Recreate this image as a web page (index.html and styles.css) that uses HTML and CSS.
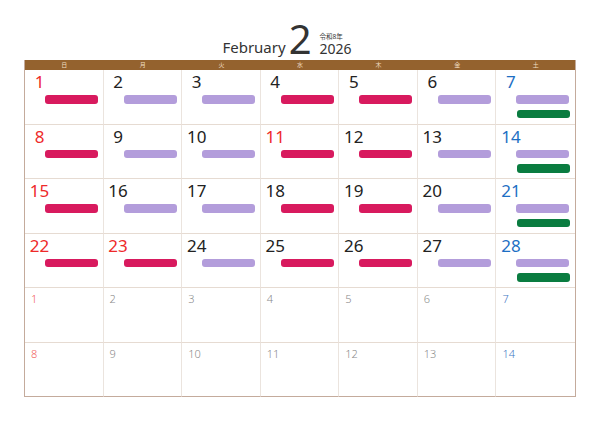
FILE: index.html
```html
<!DOCTYPE html>
<html lang="ja">
<head>
<meta charset="utf-8">
<link rel="stylesheet" href="styles.css">
</head>
<body>
<div class="page">
  <div class="title">
    <span class="month">February</span>
    <span class="big">2</span>
    <span class="yearbox"><span class="era">令和8年</span><span class="year">2026</span></span>
  </div>
  <div class="cal">
    <div class="hd">日</div><div class="hd">月</div><div class="hd">火</div><div class="hd">水</div><div class="hd">木</div><div class="hd">金</div><div class="hd">土</div>

    <div class="cell"><span class="num red">1</span><i class="bar r"></i></div>
    <div class="cell"><span class="num">2</span><i class="bar p"></i></div>
    <div class="cell"><span class="num">3</span><i class="bar p"></i></div>
    <div class="cell"><span class="num">4</span><i class="bar r"></i></div>
    <div class="cell"><span class="num">5</span><i class="bar r"></i></div>
    <div class="cell"><span class="num">6</span><i class="bar p"></i></div>
    <div class="cell last"><span class="num blue">7</span><i class="bar p"></i><i class="bar g"></i></div>

    <div class="cell"><span class="num red">8</span><i class="bar r"></i></div>
    <div class="cell"><span class="num">9</span><i class="bar p"></i></div>
    <div class="cell"><span class="num">10</span><i class="bar p"></i></div>
    <div class="cell"><span class="num red">11</span><i class="bar r"></i></div>
    <div class="cell"><span class="num">12</span><i class="bar r"></i></div>
    <div class="cell"><span class="num">13</span><i class="bar p"></i></div>
    <div class="cell last"><span class="num blue">14</span><i class="bar p"></i><i class="bar g"></i></div>

    <div class="cell"><span class="num red">15</span><i class="bar r"></i></div>
    <div class="cell"><span class="num">16</span><i class="bar p"></i></div>
    <div class="cell"><span class="num">17</span><i class="bar p"></i></div>
    <div class="cell"><span class="num">18</span><i class="bar r"></i></div>
    <div class="cell"><span class="num">19</span><i class="bar r"></i></div>
    <div class="cell"><span class="num">20</span><i class="bar p"></i></div>
    <div class="cell last"><span class="num blue">21</span><i class="bar p"></i><i class="bar g"></i></div>

    <div class="cell"><span class="num red">22</span><i class="bar r"></i></div>
    <div class="cell"><span class="num red">23</span><i class="bar r"></i></div>
    <div class="cell"><span class="num">24</span><i class="bar p"></i></div>
    <div class="cell"><span class="num">25</span><i class="bar r"></i></div>
    <div class="cell"><span class="num">26</span><i class="bar r"></i></div>
    <div class="cell"><span class="num">27</span><i class="bar p"></i></div>
    <div class="cell last"><span class="num blue">28</span><i class="bar p"></i><i class="bar g"></i></div>

    <div class="cell"><span class="sm red">1</span></div>
    <div class="cell"><span class="sm">2</span></div>
    <div class="cell"><span class="sm">3</span></div>
    <div class="cell"><span class="sm">4</span></div>
    <div class="cell"><span class="sm">5</span></div>
    <div class="cell"><span class="sm">6</span></div>
    <div class="cell last"><span class="sm blue">7</span></div>

    <div class="cell bottom"><span class="sm red">8</span></div>
    <div class="cell bottom"><span class="sm">9</span></div>
    <div class="cell bottom"><span class="sm">10</span></div>
    <div class="cell bottom"><span class="sm">11</span></div>
    <div class="cell bottom"><span class="sm">12</span></div>
    <div class="cell bottom"><span class="sm">13</span></div>
    <div class="cell bottom last"><span class="sm blue">14</span></div>
  </div>
</div>
</body>
</html>
```
FILE: styles.css
```css
* { box-sizing: border-box; }
html, body { margin: 0; padding: 0; background: #fff; }
body { font-family: "Noto Sans", "Noto Sans CJK JP", sans-serif; font-weight: 300; color: #222; }
.page { width: 600px; height: 424px; padding: 0 24px; }
.title {
  height: 60px;
  display: flex;
  justify-content: center;
  align-items: flex-end;
  padding-bottom: 3px;
  padding-right: 26px;
  color: #333;
}
.month { font-size: 15px; line-height: 20px; margin-right: 3px; font-weight: 400; }
.big { font-size: 40px; line-height: 30px; margin-bottom: 3px; margin-right: 8px; font-weight: 400; }
.yearbox { display: flex; flex-direction: column; line-height: 1; }
.era { font-size: 6.5px; margin-bottom: 1px; font-weight: 400; }
.year { font-size: 14px; line-height: 16px; font-weight: 400; }
.cal {
  display: grid;
  grid-template-columns: repeat(7, 1fr);
  grid-template-rows: 10px repeat(6, 54.5px);
  border-left: 1px solid #c4ab9c;
  border-right: 1px solid #c4ab9c;
}
.hd {
  background: #94622e;
  color: #f1dfc4;
  font-size: 6px;
  line-height: 10px;
  text-align: center;
  font-weight: 400;
}
.cell {
  border-right: 1px solid #ebe4de;
  border-bottom: 1px solid #e6dbd2;
  display: flex;
  flex-direction: column;
  align-items: flex-start;
  padding-top: 2px;
}
.cell.last { border-right: 0; }
.cell.bottom { border-bottom: 1px solid #c4ab9c; }
.num {
  width: 29px;
  text-align: center;
  font-size: 17px;
  line-height: 20px;
  color: #222;
  font-weight: 400;
}
.num.red { color: #ee2a2a; }
.num.blue { color: #1d6fc4; }
.sm {
  font-size: 11px;
  line-height: 14px;
  padding: 2px 0 0 6px;
  color: #8a8a8a;
}
.sm.red { color: #f15a5a; }
.sm.blue { color: #3f78c4; }
.bar {
  display: block;
  width: 53px;
  height: 8.5px;
  border-radius: 3px;
  margin: 3px 0 0 20px;
}
.bar.r { background: #d81a5e; }
.bar.p { background: #b39ddb; }
.bar.g { background: #0a7c40; margin-top: 6px; margin-left: 21px; }
```
